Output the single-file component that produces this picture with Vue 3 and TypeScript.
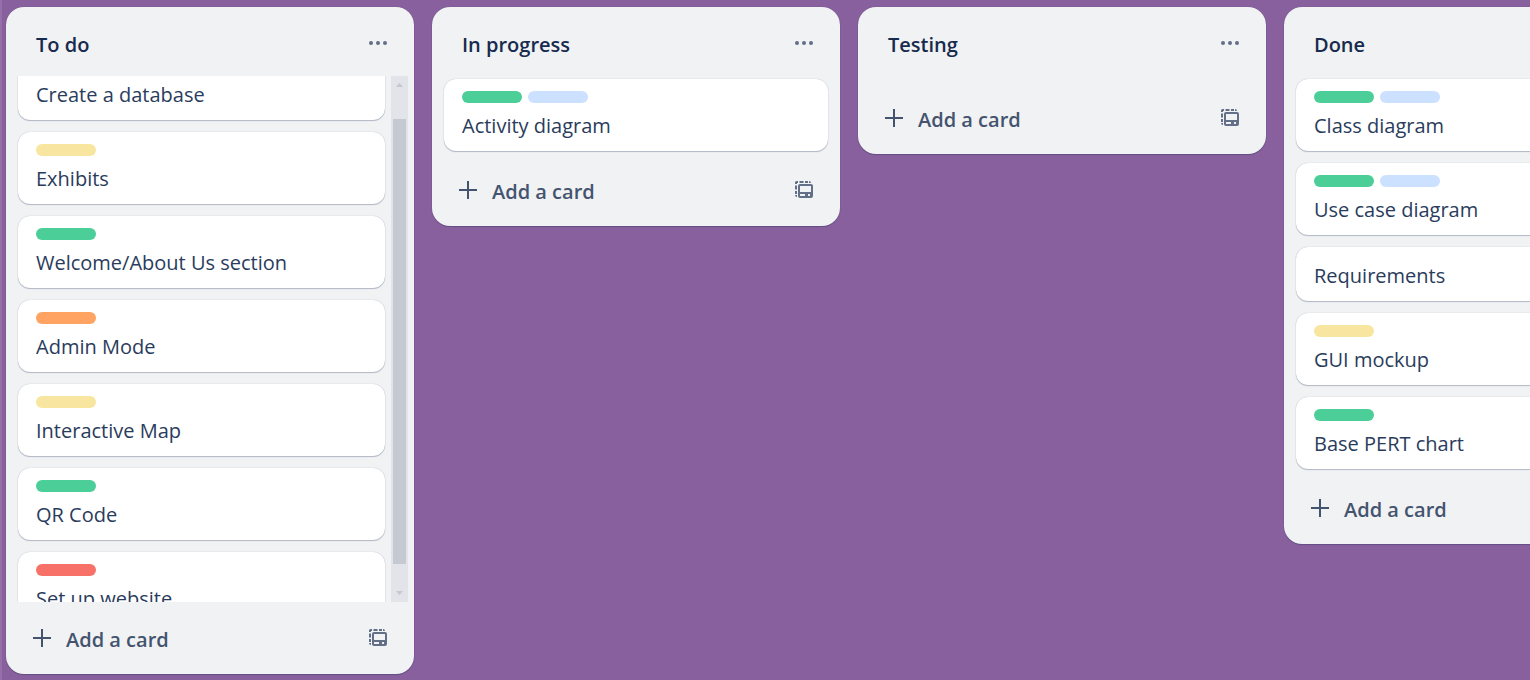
<script setup lang="ts">
import { computed, onMounted, onUnmounted, ref } from 'vue'

type Label = 'green' | 'blue' | 'yellow' | 'orange' | 'red'
interface Card { title: string; labels: Label[] }
interface List { title: string; cards: Card[] }

const lists: List[] = [
  {
    title: 'To do',
    cards: [
      { title: 'Create a database', labels: ['green'] },
      { title: 'Exhibits', labels: ['yellow'] },
      { title: 'Welcome/About Us section', labels: ['green'] },
      { title: 'Admin Mode', labels: ['orange'] },
      { title: 'Interactive Map', labels: ['yellow'] },
      { title: 'QR Code', labels: ['green'] },
      { title: 'Set up website', labels: ['red'] },
    ],
  },
  { title: 'In progress', cards: [{ title: 'Activity diagram', labels: ['green', 'blue'] }] },
  { title: 'Testing', cards: [] },
  {
    title: 'Done',
    cards: [
      { title: 'Class diagram', labels: ['green', 'blue'] },
      { title: 'Use case diagram', labels: ['green', 'blue'] },
      { title: 'Requirements', labels: [] },
      { title: 'GUI mockup', labels: ['yellow'] },
      { title: 'Base PERT chart', labels: ['green'] },
    ],
  },
]

const INITIAL_SCROLL = 31
const bodies = ref<HTMLElement[]>([])
const metrics = ref(lists.map(() => ({ top: 0, view: 1, full: 1 })))

function measure(i: number) {
  const el = bodies.value[i]
  if (el) metrics.value[i] = { top: el.scrollTop, view: el.clientHeight, full: el.scrollHeight }
}

function measureAll() {
  lists.forEach((_, i) => measure(i))
}

const thumbs = computed(() =>
  metrics.value.map((m) => ({
    visible: m.full > m.view,
    height: `${(m.view / m.full) * 100}%`,
    top: `${(m.top / m.full) * 100}%`,
  })),
)

onMounted(() => {
  bodies.value.forEach((el) => {
    el.scrollTop = INITIAL_SCROLL
  })
  measureAll()
  window.addEventListener('resize', measureAll)
})
onUnmounted(() => window.removeEventListener('resize', measureAll))
</script>

<template>
  <main class="board">
    <section v-for="(list, i) in lists" :key="list.title" class="list">
      <header class="list-header">
        <h2>{{ list.title }}</h2>
        <button class="icon-button" type="button" :aria-label="`${list.title} list actions`">
          <svg width="24" height="24" viewBox="0 0 24 24" fill="currentColor">
            <circle cx="5" cy="12" r="2" />
            <circle cx="12" cy="12" r="2" />
            <circle cx="19" cy="12" r="2" />
          </svg>
        </button>
      </header>

      <div class="list-body">
        <ul ref="bodies" class="cards" @scroll="measure(i)">
          <li v-for="card in list.cards" :key="card.title" class="card">
            <div v-if="card.labels.length" class="labels">
              <span v-for="label in card.labels" :key="label" class="label" :class="label"></span>
            </div>
            <a href="#">{{ card.title }}</a>
          </li>
        </ul>
        <div v-if="thumbs[i].visible" class="scrollbar" aria-hidden="true">
          <svg class="arrow" width="17" height="17" viewBox="0 0 17 17"><path d="M5 11l3.5-4 3.5 4z" /></svg>
          <div class="track">
            <div class="thumb" :style="{ height: thumbs[i].height, top: thumbs[i].top }"></div>
          </div>
          <svg class="arrow" width="17" height="17" viewBox="0 0 17 17"><path d="M5 6l3.5 4L12 6z" /></svg>
        </div>
      </div>

      <footer class="list-footer">
        <button class="add-button" type="button">
          <svg width="24" height="24" viewBox="0 0 24 24" fill="currentColor">
            <path d="M11 3h2v8h8v2h-8v8h-2v-8H3v-2h8z" />
          </svg>
          <span>Add a card</span>
        </button>
        <button class="icon-button" type="button" aria-label="Create from template">
          <svg width="24" height="24" viewBox="0 0 24 24" fill="currentColor">
            <path d="M3 6V4.500Q3 3 4.500 3H6v2H5v1zM7.500 3h4v2h-4zM13 3h3v2h-3zM17 3q2 0 2 2h-2zM3 7.500h2v4H3zM3 13h2v3H3zM3 17h2v2q-2 0-2-2z" />
            <path fill-rule="evenodd" d="M8 6h11q2 0 2 2v10q0 2-2 2H8q-2 0-2-2V8q0-2 2-2zM8 8v6h11V8zM8 16v2h5v-2zM16 16v2h2v-2z" />
          </svg>
        </button>
      </footer>
    </section>
  </main>
</template>

<style>
body {
  margin: 0;
  background: #89609e;
}
</style>

<style scoped>
.board {
  box-sizing: border-box;
  height: 100vh;
  padding: 7px 4px 6px;
  display: flex;
  align-items: flex-start;
  gap: 18px;
  overflow: hidden;
  border-left: 2px solid #9570a8;
  background: #89609e;
  color: #172b4d;
  font: 400 20px/30px "Open Sans", "Noto Sans", sans-serif;
}
.list {
  box-sizing: border-box;
  flex: 0 0 408px;
  max-height: 100%;
  display: flex;
  flex-direction: column;
  border-radius: 18px;
  background: #f1f2f4;
  box-shadow: 0 1px 1px #091e4240, 0 0 1px #091e424f;
}
.list-header {
  flex: none;
  display: flex;
  align-items: flex-start;
  justify-content: space-between;
  box-sizing: border-box;
  height: 69px;
  padding: 12px 12px 0 30px;
}
h2 {
  margin: 0;
  padding-top: 11px;
  font-size: 20px;
  font-weight: 600;
  line-height: 30px;
}
button {
  border: 0;
  background: none;
  font: inherit;
  cursor: pointer;
}
.icon-button {
  width: 48px;
  height: 48px;
  padding: 12px;
  border-radius: 12px;
  color: #626f86;
}
svg {
  display: block;
}
.list-body {
  display: flex;
  min-height: 0;
  margin: 0 6px;
}
.cards {
  flex: 1;
  display: flex;
  flex-direction: column;
  gap: 12px;
  margin: 0;
  padding: 3px 6px;
  list-style: none;
  overflow-y: auto;
  scrollbar-width: none;
}
.card {
  flex: none;
  padding: 12px 18px 10px;
  border-radius: 12px;
  background: #fff;
  box-shadow: 0 1px 1px #091e4240, 0 0 1px #091e424f;
}
.card a {
  display: block;
  padding-top: 2px;
  color: #2a3c5c;
  text-decoration: none;
}
.labels {
  display: flex;
  gap: 6px;
  padding-bottom: 6px;
}
.label {
  width: 60px;
  height: 12px;
  border-radius: 6px;
}
.green { background: #4bce97; }
.blue { background: #cce0ff; }
.yellow { background: #f8e6a0; }
.orange { background: #fea362; }
.red { background: #f87168; }
.scrollbar {
  flex: 0 0 17px;
  display: flex;
  flex-direction: column;
  background: #e2e4e9;
}
.arrow {
  flex: none;
  fill: #c4c9d2;
}
.track {
  position: relative;
  flex: 1;
}
.thumb {
  position: absolute;
  left: 2px;
  right: 2px;
  background: #c4c9d2;
}
.list-footer {
  flex: none;
  display: flex;
  align-items: center;
  justify-content: space-between;
  padding: 12px;
}
.add-button {
  display: flex;
  align-items: center;
  gap: 12px;
  height: 48px;
  padding: 0 12px;
  color: #44546f;
  font-weight: 600;
}
.add-button span {
  padding-top: 3px;
}
</style>
